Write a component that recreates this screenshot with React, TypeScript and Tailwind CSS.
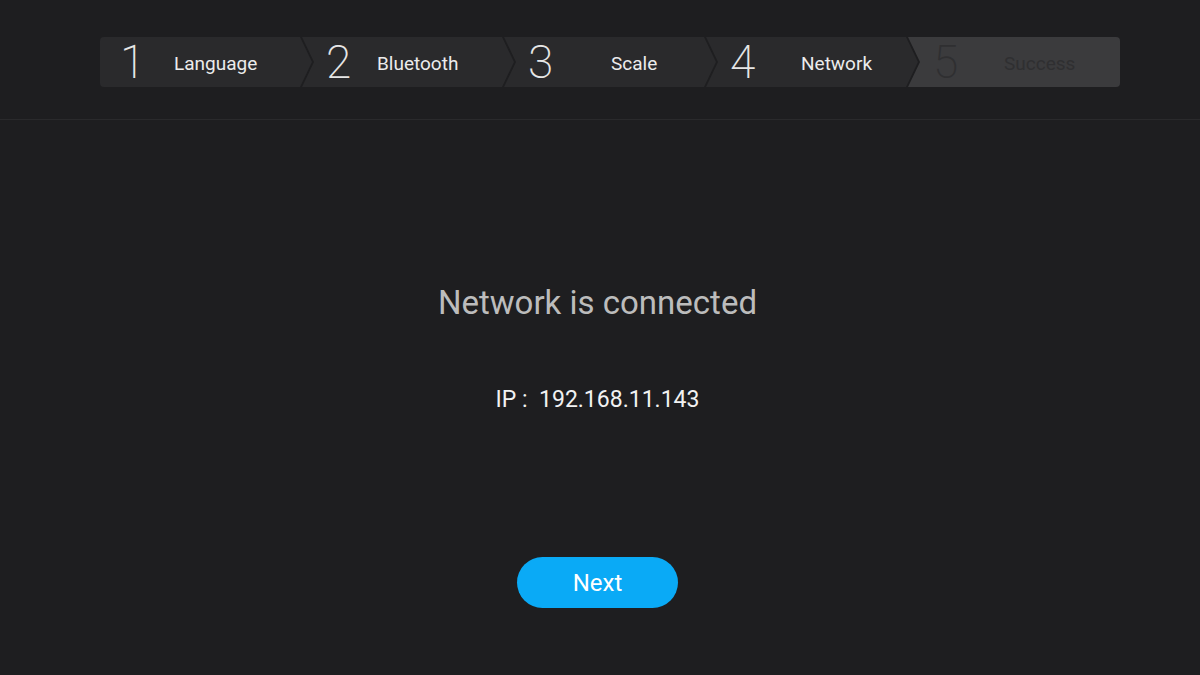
// Setup wizard – network step
const steps = [
  { n: "1", label: "Language", ml: "ml-[18px]", pl: "pl-[20px]" },
  { n: "2", label: "Bluetooth", ml: "ml-[15px]", pl: "pl-[24px]" },
  { n: "3", label: "Scale", ml: "ml-[47px]", pl: "pl-[24px]" },
  { n: "4", label: "Network", ml: "ml-[35px]", pl: "pl-[24px]" },
  { n: "5", label: "Success", ml: "ml-[35px]", pl: "pl-[25px]" },
];

function Step({ step, index }: { step: (typeof steps)[number]; index: number }) {
  const first = index === 0;
  const last = index === steps.length - 1;
  const shape = first
    ? "[clip-path:polygon(0_0,calc(100%-12px)_0,100%_50%,calc(100%-12px)_100%,0_100%)] rounded-l-[4px]"
    : last
      ? "[clip-path:polygon(0_0,100%_0,100%_100%,0_100%,12px_50%)] rounded-r-[4px]"
      : "[clip-path:polygon(0_0,calc(100%-12px)_0,100%_50%,calc(100%-12px)_100%,0_100%,12px_50%)]";
  const done = !last;
  return (
    <div
      className={`flex items-center h-[50px] w-[212px] shrink-0 ${
        first ? "" : "-ml-[10px]"
      } ${step.pl} ${shape} ${done ? "bg-[#2a2a2c]" : "bg-[#3b3b3d]"}`}
    >
      <span
        className={`w-[36px] text-[46px] leading-none font-extralight ${
          done ? "text-[#e6e6e6]" : "text-[#2f2f31]"
        }`}
      >
        {step.n}
      </span>
      <span
        className={`${step.ml} mt-[3px] text-[19px] leading-none ${
          done ? "text-[#ececec]" : "text-[#2f2f31]"
        }`}
      >
        {step.label}
      </span>
    </div>
  );
}

export default function App() {
  return (
    <div
      className="w-[1200px] h-[675px] bg-[#1e1e20] flex flex-col overflow-hidden"
      style={{ fontFamily: "Roboto, 'Noto Sans', sans-serif" }}
    >
      <header className="h-[120px] border-b border-[#2a2a2c] flex pl-[100px] pt-[37px]">
        <div className="flex">
          {steps.map((s, i) => (
            <Step key={s.n} step={s} index={i} />
          ))}
        </div>
      </header>

      <main className="flex-1 flex flex-col items-center pr-[5px]">
        <h1 className="mt-[163px] text-[33px] leading-[40px] text-[#bcbcbc]">
          Network is connected
        </h1>
        <p className="mt-[63px] text-[23px] leading-[28px] text-[#f2f2f2] whitespace-pre">
          IP :  192.168.11.143
        </p>
        <button className="mt-[143px] w-[161px] h-[51px] rounded-full bg-[#0aaaf6] text-white text-[24px]">
          Next
        </button>
      </main>
    </div>
  );
}
